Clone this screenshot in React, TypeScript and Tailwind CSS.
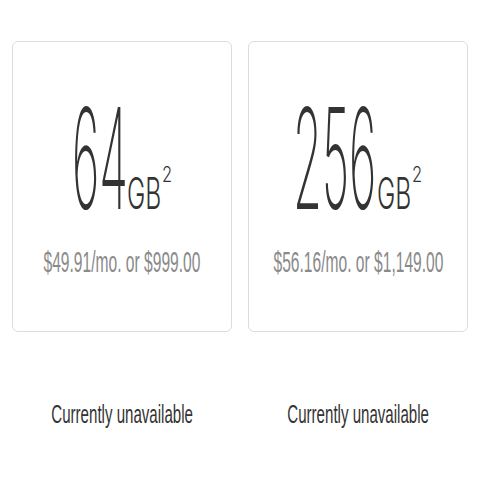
export default function App() {
  const cards = [
    { size: "64", box: "w-[53px]", price: "$49.91/mo. or $999.00", priceMx: "-mx-[72px]" },
    { size: "256", box: "w-[82px]", price: "$56.16/mo. or $1,149.00", priceMx: "-mx-[78px]" },
  ];
  return (
    <div className="w-[480px] h-[480px] overflow-hidden bg-white px-[12px] pt-[41px]">
      <div className="grid grid-cols-2 gap-4">
        {cards.map((c) => (
          <div key={c.size} className="flex flex-col items-center">
            <div className="w-full h-[291px] rounded-[6px] border border-[#dcdcdc] flex flex-col items-center">
              <div
                className="mt-[46px] flex items-baseline text-[#333333]"
                style={{ fontFamily: "Inter, sans-serif" }}
              >
                <div className={`${c.box} shrink-0`}>
                  <span className="inline-block whitespace-nowrap origin-left scale-x-[0.335] -mr-[100px] text-[140px] leading-none font-extralight">
                    {c.size}
                  </span>
                </div>
                <div className="w-[35px] shrink-0 ml-[2px]">
                  <span className="inline-block whitespace-nowrap origin-left scale-x-[0.56] -mr-[30px] text-[44px] leading-none font-light">
                    GB
                  </span>
                </div>
                <div className="w-[11px] shrink-0">
                  <span className="inline-block whitespace-nowrap origin-left scale-x-[0.75] -translate-y-[27px] -mr-[4px] text-[22px] leading-none font-light">
                    2
                  </span>
                </div>
              </div>
              <div
                className={`mt-[19px] ${c.priceMx} whitespace-nowrap scale-x-[0.52] text-[30px] leading-none text-[#8a8a8a]`}
                style={{ fontFamily: "'Liberation Sans', Arial, sans-serif" }}
              >
                {c.price}
              </div>
            </div>
            <div
              className="mt-[69px] -mx-[51px] whitespace-nowrap scale-x-[0.58] text-[26px] leading-none text-[#333333]"
              style={{ fontFamily: "'Liberation Sans', Arial, sans-serif" }}
            >
              Currently unavailable
            </div>
          </div>
        ))}
      </div>
    </div>
  );
}
